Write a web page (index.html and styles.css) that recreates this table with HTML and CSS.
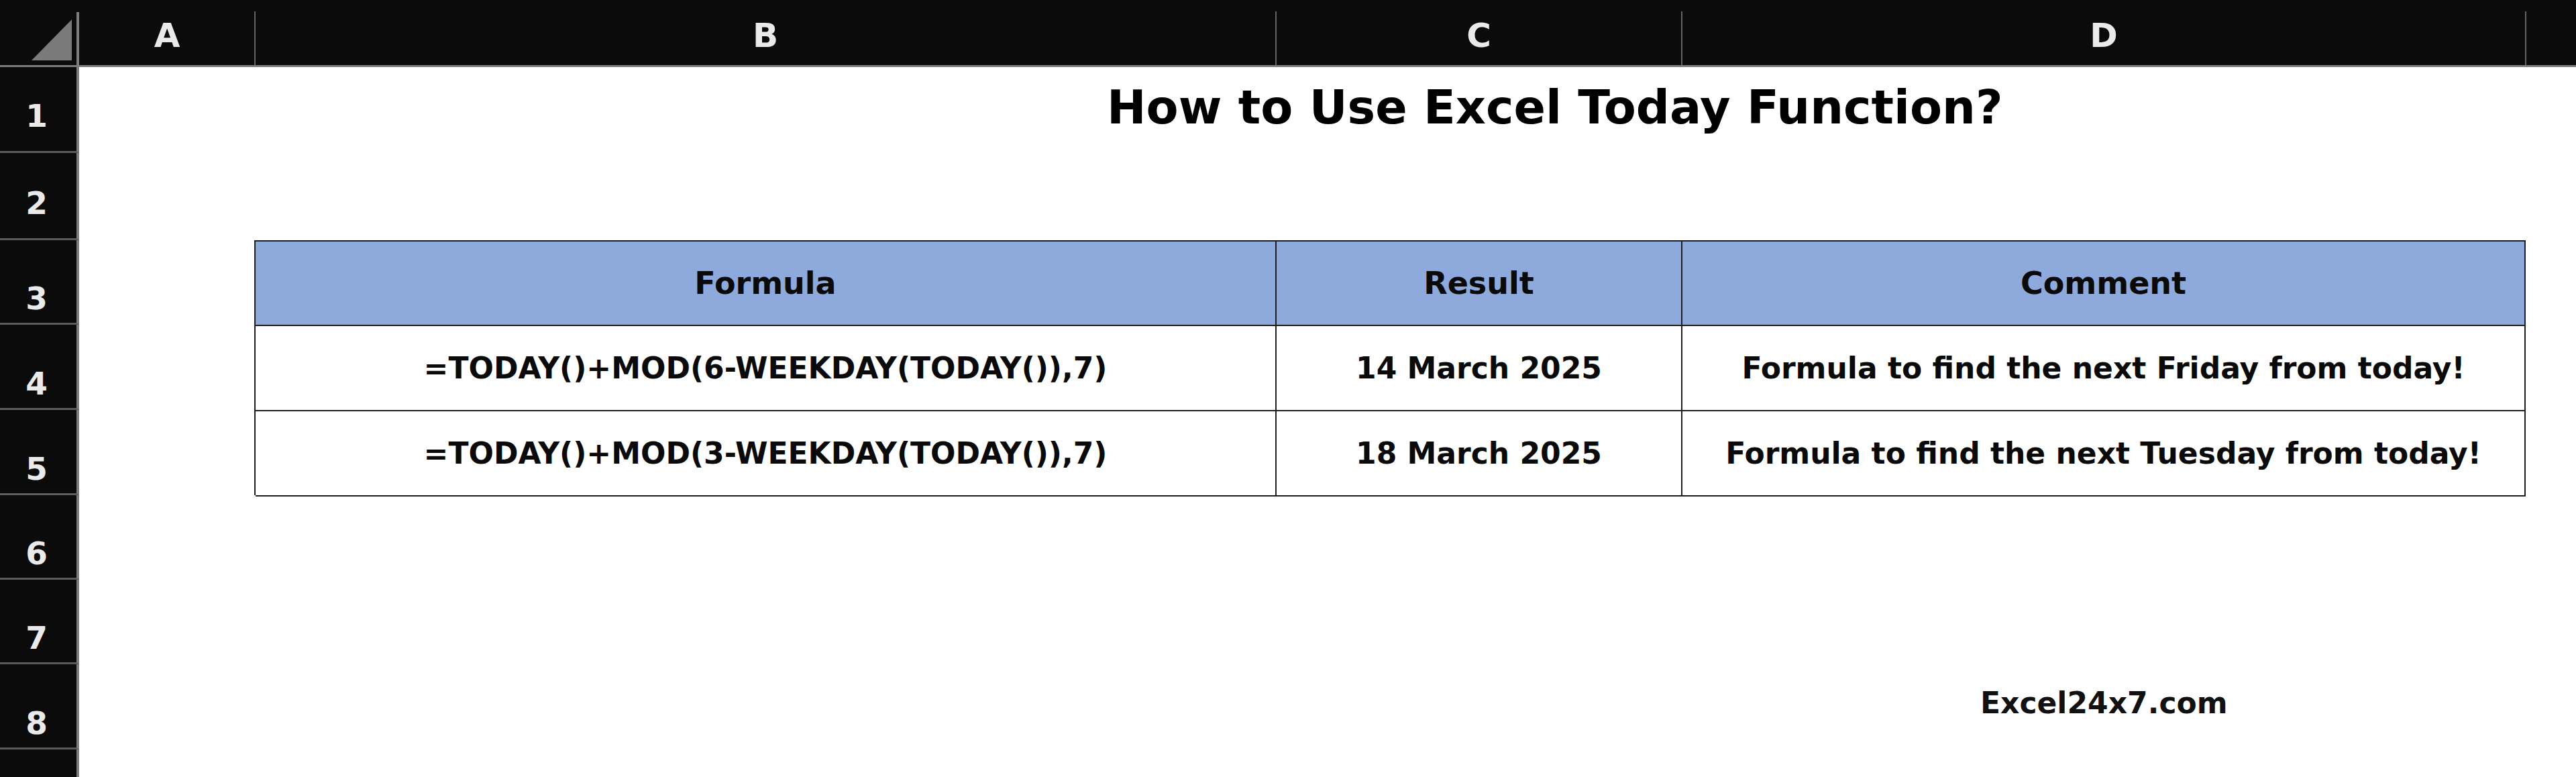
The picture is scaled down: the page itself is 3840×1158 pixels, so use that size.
FILE: index.html
```html
<!DOCTYPE html>
<html lang="en">
<head>
<meta charset="utf-8">
<title>How to Use Excel Today Function?</title>
<link rel="stylesheet" href="styles.css">
</head>
<body>
<div class="sheet">
  <div class="corner"><span class="tri"></span></div>
  <div class="colhead">A</div>
  <div class="colhead sep">B</div>
  <div class="colhead sep">C</div>
  <div class="colhead sep">D</div>
  <div class="colhead sep"></div>

  <div class="rowhead high row1">1</div>
  <div class="rowhead high row2">2</div>
  <div class="rowhead row3">3</div>
  <div class="rowhead row4">4</div>
  <div class="rowhead row5">5</div>
  <div class="rowhead row6">6</div>
  <div class="rowhead row7">7</div>
  <div class="rowhead row8">8</div>
  <div class="rowhead row9"></div>

  <div class="title">How to Use Excel Today Function?</div>

  <div class="table">
    <div class="th">Formula</div>
    <div class="th">Result</div>
    <div class="th">Comment</div>
    <div class="td">=TODAY()+MOD(6-WEEKDAY(TODAY()),7)</div>
    <div class="td">14 March 2025</div>
    <div class="td">Formula to find the next Friday from today!</div>
    <div class="td">=TODAY()+MOD(3-WEEKDAY(TODAY()),7)</div>
    <div class="td">18 March 2025</div>
    <div class="td">Formula to find the next Tuesday from today!</div>
  </div>

  <div class="mark">Excel24x7.com</div>
</div>
</body>
</html>
```

FILE: styles.css
```css
* { box-sizing: border-box; }
html, body { margin: 0; padding: 0; background: #ffffff; }
body { width: 3840px; height: 1158px; overflow: hidden; font-family: "DejaVu Sans", sans-serif; }

.sheet {
  display: grid;
  grid-template-columns: 118px 262px 1522px 605px 1258px 1fr;
  grid-template-rows: 100px 128px 130px 126px 127px 127px 126px 126px 127px 1fr;
  width: 3840px;
  height: 1158px;
}

.corner {
  grid-row: 1; grid-column: 1;
  position: relative;
  background: #0b0b0b;
  border-bottom: 3px solid #7c7c7c;
}
.corner::after {
  content: ""; position: absolute; right: 0; top: 18px; bottom: 0;
  width: 4px; background: #7e7e7e;
}
.tri {
  position: absolute; left: 47px; top: 29px;
  width: 0; height: 0;
  border-style: solid;
  border-width: 0 0 61px 60px;
  border-color: transparent transparent #7a7a7a transparent;
}

.colhead {
  grid-row: 1;
  position: relative;
  background: #0b0b0b;
  border-bottom: 3px solid #7c7c7c;
  color: #eaeaea;
  font-weight: 700;
  font-size: 50px;
  display: flex; align-items: flex-end; justify-content: center;
  padding-bottom: 19px;
  line-height: 1;
}
.colhead.sep::before {
  content: ""; position: absolute; left: -1px; top: 17px; bottom: 0;
  width: 2px; background: #636363;
}

.rowhead {
  grid-column: 1;
  background: #0b0b0b;
  border-right: 4px solid #7e7e7e;
  border-bottom: 3px solid #5c5c5c;
  color: #eaeaea;
  font-weight: 700;
  font-size: 47px;
  line-height: 1;
  display: flex; align-items: flex-end; justify-content: center;
  padding-bottom: 13px;
  padding-right: 5px;
}
.rowhead.high { padding-bottom: 29px; }
.row1 { grid-row: 2; } .row2 { grid-row: 3; } .row3 { grid-row: 4; }
.row4 { grid-row: 5; } .row5 { grid-row: 6; } .row6 { grid-row: 7; }
.row7 { grid-row: 8; } .row8 { grid-row: 9; } .row9 { grid-row: 10; border-bottom: 0; }

.title {
  grid-row: 2; grid-column: 3 / 7;
  padding-left: 1270px;
  display: flex; align-items: center;
  font-weight: 700;
  font-size: 70px;
  color: #000;
  padding-bottom: 8px;
  white-space: nowrap;
}

.table {
  grid-row: 4 / 7; grid-column: 3 / 6;
  display: grid;
  grid-template-columns: 1522px 605px 1fr;
  grid-template-rows: 126px 127px 127px;
  border-top: 2px solid #1e1e1e;
  border-left: 2px solid #1e1e1e;
  margin-left: -1px;
}
.th, .td {
  display: flex; align-items: center; justify-content: center;
  border-right: 2px solid #1e1e1e;
  border-bottom: 2px solid #1e1e1e;
  color: #0a0a0a;
  font-weight: 700;
  font-size: 44px;
  white-space: nowrap;
}
.th { background: #8ea9db; font-size: 46px; }

.mark {
  grid-row: 9; grid-column: 5;
  display: flex; align-items: center;
  padding-left: 445px;
  padding-bottom: 12px;
  font-weight: 700;
  font-size: 44px;
  color: #111;
}
```
